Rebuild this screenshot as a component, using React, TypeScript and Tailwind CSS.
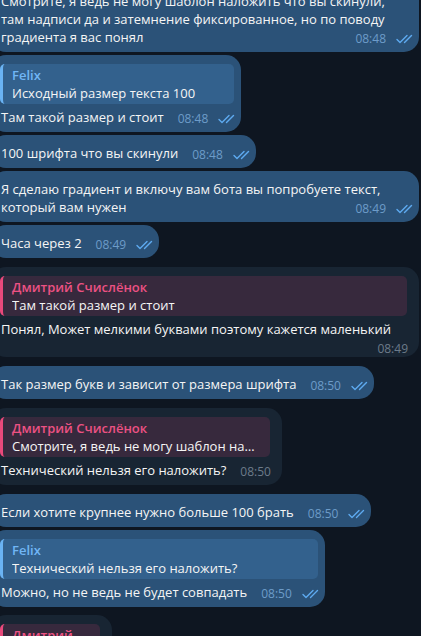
import React from "react";

type Msg = {
  out: boolean;
  text: string;
  time: string;
  quote?: { name: string; text: string };
  gap: string;
};

const messages: Msg[] = [
  {
    out: true,
    text: "Смотрите, я ведь не могу шаблон наложить что вы скинули, там надписи да и затемнение фиксированное, но по поводу градиента я вас понял",
    time: "08:48",
    gap: "-mt-[17px]",
  },
  {
    out: true,
    quote: { name: "Felix", text: "Исходный размер текста 100" },
    text: "Там такой размер и стоит",
    time: "08:48",
    gap: "mt-[3px]",
  },
  { out: true, text: "100 шрифта что вы скинули", time: "08:48", gap: "mt-[3px]" },
  {
    out: true,
    text: "Я сделаю градиент и включу вам бота вы попробуете текст, который вам нужен",
    time: "08:49",
    gap: "mt-[3px]",
  },
  { out: true, text: "Часа через 2", time: "08:49", gap: "mt-[3px]" },
  {
    out: false,
    quote: { name: "Дмитрий Счислёнок", text: "Там такой размер и стоит" },
    text: "Понял, Может мелкими буквами поэтому кажется маленький",
    time: "08:49",
    gap: "mt-[9px]",
  },
  {
    out: true,
    text: "Так размер букв и зависит от размера шрифта",
    time: "08:50",
    gap: "mt-[9px]",
  },
  {
    out: false,
    quote: {
      name: "Дмитрий Счислёнок",
      text: "Смотрите, я ведь не могу шаблон наложить что вы скинули",
    },
    text: "Технический нельзя его наложить?",
    time: "08:50",
    gap: "mt-[9px]",
  },
  {
    out: true,
    text: "Если хотите крупнее нужно больше 100 брать",
    time: "08:50",
    gap: "mt-[9px]",
  },
  {
    out: true,
    quote: { name: "Felix", text: "Технический нельзя его наложить?" },
    text: "Можно, но не ведь не будет совпадать",
    time: "08:50",
    gap: "mt-[3px]",
  },
  {
    out: false,
    quote: { name: "Дмитрий Счислёнок", text: "Можно, но не ведь не будет совпадать" },
    text: "Понятно",
    time: "08:51",
    gap: "mt-[8px]",
  },
];

function Checks() {
  return (
    <svg width="17" height="10" viewBox="0 0 17 10" fill="none">
      <path d="M1 5.5l3 3L11 1.5" stroke="#5eaaf0" strokeWidth="1.4" strokeLinecap="round" strokeLinejoin="round" />
      <path d="M8.5 8.5L15.5 1.5" stroke="#5eaaf0" strokeWidth="1.4" strokeLinecap="round" />
    </svg>
  );
}

function Bubble({ m }: { m: Msg }) {
  const bg = m.out ? "bg-[#2b5278]" : "bg-[#182533]";
  return (
    <div
      className={`${m.gap} ${bg} max-w-[428px] rounded-[15px] pl-[10px] ${
        m.out ? "pr-[6px]" : "pr-[11px]"
      } pt-[9px] pb-[6px] flow-root`}
    >
      {m.quote && (
        <div
          className={`w-0 min-w-full mb-[4px] -ml-px rounded-[5px] border-l-[3px] pl-[9px] pr-2 py-[2px] ${
            m.out ? "bg-[#33618d] border-[#6ab3f3]" : "bg-[#37293d] border-[#e9497b]"
          }`}
        >
          <div className={`font-semibold leading-[18px] ${m.out ? "text-[#71b6f5]" : "text-[#ec5183]"}`}>
            {m.quote.name}
          </div>
          <div className="truncate leading-[18px] text-[#f5f5f5]">{m.quote.text}</div>
        </div>
      )}
      <div className="pr-[10px] leading-[18px] text-[#f5f5f5]">
        {m.text}
        <span
          className={`float-right ml-[14px] -mr-[10px] mt-[3px] -mb-[6px] flex items-center gap-[10px] text-[12px] leading-[16px] ${
            m.out ? "text-[#6d9cc9]" : "text-[#6c7b8a]"
          }`}
        >
          {m.time}
          {m.out && <Checks />}
        </span>
      </div>
    </div>
  );
}

export default function App() {
  return (
    <div className="h-[636px] w-[421px] overflow-hidden bg-[#0e1621] font-['Open_Sans',sans-serif] text-[13px]">
      <div className="-ml-[9px] flex flex-col items-start">
        {messages.map((m, i) => (
          <Bubble key={i} m={m} />
        ))}
      </div>
    </div>
  );
}
